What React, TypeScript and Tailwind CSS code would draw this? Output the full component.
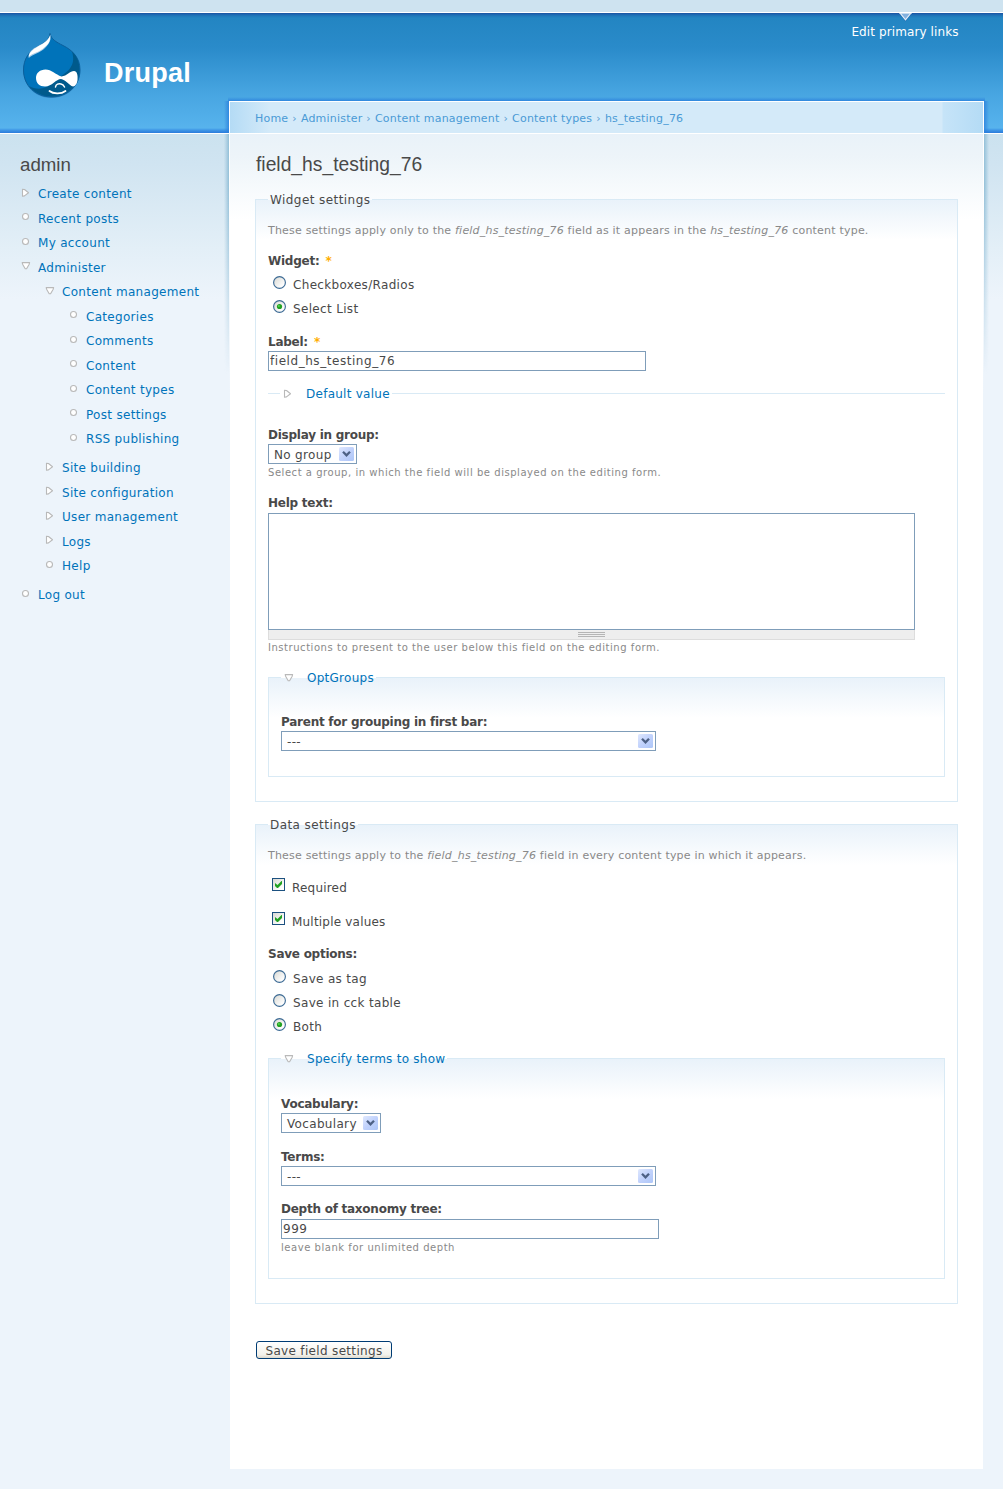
import React, { useState } from 'react';

type MenuState = 'leaf' | 'collapsed' | 'expanded';

interface MenuItem {
  title: string;
  state: MenuState;
  children?: MenuItem[];
}

const menu: MenuItem[] = [
  { title: 'Create content', state: 'collapsed' },
  { title: 'Recent posts', state: 'leaf' },
  { title: 'My account', state: 'leaf' },
  {
    title: 'Administer',
    state: 'expanded',
    children: [
      {
        title: 'Content management',
        state: 'expanded',
        children: [
          { title: 'Categories', state: 'leaf' },
          { title: 'Comments', state: 'leaf' },
          { title: 'Content', state: 'leaf' },
          { title: 'Content types', state: 'leaf' },
          { title: 'Post settings', state: 'leaf' },
          { title: 'RSS publishing', state: 'leaf' },
        ],
      },
      { title: 'Site building', state: 'collapsed' },
      { title: 'Site configuration', state: 'collapsed' },
      { title: 'User management', state: 'collapsed' },
      { title: 'Logs', state: 'collapsed' },
      { title: 'Help', state: 'leaf' },
    ],
  },
  { title: 'Log out', state: 'leaf' },
];

const breadcrumb = ['Home', 'Administer', 'Content management', 'Content types', 'hs_testing_76'];

function MenuIcon({ state, className = '' }: { state: MenuState; className?: string }) {
  return (
    <svg width="10" height="10" viewBox="0 0 10 10" className={`shrink-0 ${className}`} fill="#fff" stroke="#b9b9b9" strokeWidth="1.1">
      {state === 'leaf' && <circle cx="4.5" cy="4.5" r="3" />}
      {state === 'collapsed' && <path d="M1.5 1.2v7l2-.3 4-3.2-4-3.2z" strokeLinejoin="round" />}
      {state === 'expanded' && <path d="M1.2 1.6h7.4l-.4 1.6-2.6 4.6H4.2L1.6 3.2z" strokeLinejoin="round" />}
    </svg>
  );
}

function Menu({ items }: { items: MenuItem[] }) {
  return (
    <ul>
      {items.map((item) => (
        <li key={item.title}>
          <div className="flex h-[24.5px] items-start">
            <MenuIcon state={item.state} className="mt-[1.5px] ml-[1px]" />
            <a href="#" className="ml-[7px] h-4 leading-4 tracking-[0.3px] whitespace-nowrap text-[#0073ba]">{item.title}</a>
          </div>
          {item.children && (
            <div className="ml-6 pb-[4.5px]">
              <Menu items={item.children} />
            </div>
          )}
        </li>
      ))}
    </ul>
  );
}

function Logo() {
  return (
    <svg width="64" height="72" viewBox="0 0 64 72">
      <path
        d="M30 3.5C31 9 36 12 43 15.500C53 20.500 60 28 60 40C60 56 47 67 31.500 67C16 67 3.500 56 3.500 40C3.500 29 9 21.500 17 17C24 13 29.500 10 30 3.500Z"
        fill="#1a5f96"
        opacity="0.35"
        transform="translate(0 1)"
      />
      <path
        d="M30 3.5C31 9 36 12 43 15.500C53 20.500 60 28 60 40C60 56 47 67 31.500 67C16 67 3.500 56 3.500 40C3.500 29 9 21.500 17 17C24 13 29.500 10 30 3.500Z"
        fill="#0073ba"
        stroke="#0b5f9c"
      />
      <path d="M52 21.500C57.500 26.500 59.500 33 59.500 40C59.500 56 46.500 66.500 31.500 66.500C22 66.500 13.500 62 9 56C18 61 28 59 37 49C45 43 57 38 52 21.500Z" fill="#005a8c" />
      <path d="M30.300 4.500C31.500 9 30 13 25 18C20 23 14 23.500 8.700 28C8 22.500 12 19 18 16C24 13 28.500 10 30.300 4.500Z" fill="#a9cde8" />
      <path d="M29.800 6C28.500 10.500 24 13.500 18 16.500C12.500 19.500 9.500 22.500 8.700 26.500C13 23 18 22.500 22.500 19C28.500 14.500 30.800 11 29.800 6Z" fill="#fff" />
      <path d="M16 48C16 43 20 39.500 25.500 39.500C31.500 39.500 35.500 44.500 41.500 46.500C47 46 50 41 54 41C57 41 58 45 57.500 50C57 54.500 54.500 57.500 51.500 56C48 53.500 45.500 50 41 49C36 49 32 56.500 25 56.500C19.500 56.500 16 53 16 48Z" fill="#fff" />
      <path d="M35.500 57C36 54 38.500 53.500 41 54C43.500 54.500 44 56 44.500 57" fill="none" stroke="#fff" strokeWidth="1.500" strokeLinecap="round" />
      <path d="M29.500 61C33 64 41 64.500 45.500 61" fill="none" stroke="#fff" strokeWidth="1.800" strokeLinecap="round" />
    </svg>
  );
}

function Radio({ label, checked, onSelect }: { label: string; checked: boolean; onSelect: () => void }) {
  return (
    <label className="flex h-4 items-start pl-[5px] leading-4">
      <input type="radio" className="sr-only" checked={checked} onChange={onSelect} />
      <svg width="13" height="13" viewBox="0 0 13 13" className="-mt-px shrink-0">
        <circle cx="6.5" cy="6.5" r="5.900" fill="url(#bevel)" stroke="#3c6a94" strokeWidth="1.150" />
        {checked && <circle cx="6.5" cy="6.5" r="2.600" fill="#21a121" />}
        {checked && <circle cx="5.900" cy="5.900" r="1" fill="#55d551" />}
      </svg>
      <span className="ml-[7px]">{label}</span>
    </label>
  );
}

function Checkbox({ label }: { label: string }) {
  const [checked, setChecked] = useState(true);

  return (
    <label className="flex h-4 items-start pl-1 leading-4">
      <input type="checkbox" className="sr-only" checked={checked} onChange={() => setChecked(!checked)} />
      <svg width="13" height="13" viewBox="0 0 13 13" className="-mt-0.5 shrink-0">
        <rect x="0.5" y="0.5" width="12" height="12" fill="url(#bevel)" stroke="#1c5180" />
        {checked && <path d="M3 5v3l2 2h1l4-4V3h-.500L5.500 7z" fill="#21a121" />}
      </svg>
      <span className="ml-[7px] tracking-[0.2px]">{label}</span>
    </label>
  );
}

function FieldLabel({ children, required }: { children: React.ReactNode; required?: boolean }) {
  return (
    <div className="flex h-4 leading-4">
      <span className="font-bold tracking-[-0.25px]">{children}</span>
      {required && <span className="ml-1.5 font-bold text-[#ffae00]">*</span>}
    </div>
  );
}

function Select({ value, className = '' }: { value: string; className?: string }) {
  return (
    <button type="button" className={`flex h-5 items-start border border-[#7f9db9] bg-white pr-0.5 pl-[5px] text-left ${className}`}>
      <span className="flex-1 pt-0.5 leading-4 whitespace-nowrap">{value}</span>
      <svg width="15" height="14" viewBox="0 0 15 14" className="mt-0.5 shrink-0">
        <rect width="15" height="14" rx="1.500" fill="url(#arrow)" />
        <path d="M4 4.800l3.500 3.500 3.500-3.500" fill="none" stroke="#4d6185" strokeWidth="2.300" />
      </svg>
    </button>
  );
}

function TextInput({ value }: { value: string }) {
  return (
    <input
      type="text"
      defaultValue={value}
      className="block h-5 w-[378px] border border-[#7f9db9] bg-white px-px text-xs tracking-[0.55px] outline-none"
    />
  );
}

function Description({ children, className = '' }: { children: React.ReactNode; className?: string }) {
  return <div className={`h-4 text-[10px] leading-4 tracking-[0.54px] whitespace-nowrap text-[#898989] ${className}`}>{children}</div>;
}

function Intro({ children }: { children: React.ReactNode }) {
  return <p className="h-4 pt-px text-[11px] leading-4 tracking-[0.2px] whitespace-nowrap text-[#898989]">{children}</p>;
}

function Legend({ children }: { children: React.ReactNode }) {
  return <legend className="h-[15px] px-0.5 leading-[17px] tracking-[0.43px]">{children}</legend>;
}

function CollapsibleLegend({ children, state, className = '' }: { children: React.ReactNode; state: MenuState; className?: string }) {
  return (
    <legend className={`flex h-[15px] items-start pr-0.5 pl-[3px] leading-[17px] ${className}`}>
      <MenuIcon state={state} className="mt-[2.5px]" />
      <a href="#" className="ml-[13px] tracking-[0.26px] text-[#0073ba]">{children}</a>
    </legend>
  );
}

export default function App() {
  const [widget, setWidget] = useState('select');
  const [save, setSave] = useState('both');

  return (
    <div className="h-[1489px] w-[1003px] overflow-hidden bg-[#edf4fb] font-['DejaVu_Sans',Verdana,sans-serif] text-xs tracking-[0.33px] text-[#494949]">
      <svg width="0" height="0" className="absolute">
        <defs>
          <linearGradient id="bevel" x1="0" y1="0" x2="1" y2="1">
            <stop offset="0.1" stopColor="#dcdcd7" />
            <stop offset="0.8" stopColor="#fff" />
          </linearGradient>
          <linearGradient id="arrow" x1="0" y1="0" x2="1" y2="1">
            <stop offset="0" stopColor="#dfe8fe" />
            <stop offset="0.5" stopColor="#c1d2fc" />
            <stop offset="1" stopColor="#adc6f8" />
          </linearGradient>
        </defs>
      </svg>

      <div className="h-3 bg-[#cee3f0]" />
      <header className="flex h-[122px] justify-between border-y border-white bg-[linear-gradient(to_bottom,#1a52a0_0px,#1d62ad_1px,#2079bb_3px,#2385c2_5px,#2a8bca_35px,#47a5e1_80px,#57b3ed_115px,#3f97e6_117px,#2a7bdb_120px)]">
        <div className="flex pt-[17px] pl-5">
          <Logo />
          <h1 className="mt-[27px] ml-[20px] h-8 font-['Liberation_Sans',Arial,sans-serif] text-[27px] leading-8 font-bold tracking-[0.25px] text-white">Drupal</h1>
        </div>
        <nav className="mr-11 flex w-[108px] flex-col items-center">
          <svg width="13" height="9" viewBox="0 0 13 9">
            <path d="M0 0h13L6.500 8.500z" fill="#1b55a5" opacity="0.6" />
            <path d="M1 0h11L6.500 6.800z" fill="#82b1df" stroke="#e4eff8" strokeWidth="1.200" />
            <path d="M0 0h13" stroke="#d7e4f0" />
          </svg>
          <a href="#" className="mt-0.5 leading-4 tracking-[0.1px] whitespace-nowrap text-white">Edit primary links</a>
        </nav>
      </header>

      <div className="flex h-[1355px] items-start bg-[linear-gradient(to_bottom,#cbe2ef_0px,#d0e4f1_30px,#e3eff7_115px,#edf4fb_165px)]">
        <aside className="w-[229px] pt-[19px] pl-5">
          <h2 className="mb-[9px] h-6 font-['Liberation_Sans',Arial,sans-serif] text-[18.7px] leading-6 tracking-normal">admin</h2>
          <Menu items={menu} />
        </aside>

        <div className="relative -mt-[33px] w-[755px]">
          {/* glow round the top of the panel */}
          <div className="absolute -top-1 -left-px h-1 w-[757px] bg-[linear-gradient(to_bottom,#2a80dd00,#2a7fdccc)]" />
          <div className="absolute top-0 -left-[5px] h-8 w-[5px] bg-[linear-gradient(to_left,#2a7fdccc,#2a80dd00)]" />
          <div className="absolute top-0 -right-[5px] h-8 w-[5px] bg-[linear-gradient(to_right,#2a7fdccc,#2a80dd00)]" />
          <div className="absolute top-[33px] -left-[5px] h-[240px] w-[5px] bg-[linear-gradient(to_left,#94c0d8,#a9cde100)] [mask-image:linear-gradient(to_bottom,#000_50px,transparent)]" />
          <div className="absolute top-[33px] -right-[5px] h-[240px] w-[5px] bg-[linear-gradient(to_right,#94c0d8,#a9cde100)] [mask-image:linear-gradient(to_bottom,#000_50px,transparent)]" />

          <div className="flex h-[33px] items-start border border-white bg-[linear-gradient(to_right,#b4dbf5,#d4eaf9_40px,#d4eaf9_712px,#c6e4f8_713px,#b4dbf5)] pt-[9px] pl-[25px] text-[11px] leading-4 tracking-[0.2px]">
            {breadcrumb.map((crumb, i) => (
              <React.Fragment key={crumb}>
                {i > 0 && <span className="mx-1 text-[#5b9fd3]">›</span>}
                <a href="#" className="text-[#4a9ad6]">{crumb}</a>
              </React.Fragment>
            ))}
          </div>

          <div className="flex h-[1335px]">
            <div className="w-px bg-[linear-gradient(to_bottom,#fff_60px,#edf4fb_260px)]" />
            <main className="w-[753px] bg-white bg-[linear-gradient(to_bottom,#e9f2f9_0px,#edf4f9_22px,#f8fbfd_60px,#fff_86px)] pt-[19px] pr-[25px] pl-[25px]">
              <h2 className="mb-[15px] h-6 pl-px font-['Liberation_Sans',Arial,sans-serif] text-[19.3px] leading-6 tracking-normal">field_hs_testing_76</h2>

              <fieldset className="border border-[#d9eaf5] bg-[linear-gradient(to_bottom,#e9f2fa_0px,#fff_40px)] px-3 pb-6">
                <Legend>Widget settings</Legend>
                <div className="pt-[15px]">
                  <Intro>
                    These settings apply only to the <em>field_hs_testing_76</em> field as it appears in the <em>hs_testing_76</em> content type.
                  </Intro>
                </div>
                <div className="mt-[15px]">
                  <FieldLabel required>Widget:</FieldLabel>
                  <div className="mt-2 flex flex-col gap-2">
                    <Radio label="Checkboxes/Radios" checked={widget === 'checkboxes'} onSelect={() => setWidget('checkboxes')} />
                    <Radio label="Select List" checked={widget === 'select'} onSelect={() => setWidget('select')} />
                  </div>
                </div>
                <div className="mt-[17px]">
                  <FieldLabel required>Label:</FieldLabel>
                  <div className="mt-px">
                    <TextInput value="field_hs_testing_76" />
                  </div>
                </div>

                <fieldset className="mt-[15px] h-[15px] border-t border-[#d9eaf5]">
                  <CollapsibleLegend state="collapsed" className="ml-3">Default value</CollapsibleLegend>
                </fieldset>

                <div className="mt-[26px]">
                  <FieldLabel>Display in group:</FieldLabel>
                  <Select value="No group" className="mt-px w-[89px]" />
                  <Description className="pt-px">Select a group, in which the field will be displayed on the editing form.</Description>
                </div>
                <div className="mt-[15px]">
                  <FieldLabel>Help text:</FieldLabel>
                  <textarea className="mt-0.5 block h-[117px] w-[647px] resize-none border border-[#7f9db9] bg-white outline-none" />
                  <div className="flex h-2.5 w-[647px] justify-center border-x border-b border-[#ddd] bg-[#eee] pt-0.5">
                    <div className="flex w-[27px] flex-col gap-px">
                      <div className="h-px bg-[#b5b5b5]" />
                      <div className="h-px bg-[#b5b5b5]" />
                      <div className="h-px bg-[#b5b5b5]" />
                    </div>
                  </div>
                  <Description>Instructions to present to the user below this field on the editing form.</Description>
                </div>

                <fieldset className="mt-3.5 border border-[#d9eaf5] bg-[linear-gradient(to_bottom,#e9f2fa_0px,#fff_40px)] px-3 pb-[25px]">
                  <CollapsibleLegend state="expanded">OptGroups</CollapsibleLegend>
                  <div className="pt-[29px]">
                    <FieldLabel>Parent for grouping in first bar:</FieldLabel>
                    <Select value="---" className="mt-px w-[375px]" />
                  </div>
                </fieldset>
              </fieldset>

              <fieldset className="mt-[15px] border border-[#d9eaf5] bg-[linear-gradient(to_bottom,#e9f2fa_0px,#fff_40px)] px-3 pb-6">
                <Legend>Data settings</Legend>
                <div className="pt-[15px]">
                  <Intro>
                    These settings apply to the <em>field_hs_testing_76</em> field in every content type in which it appears.
                  </Intro>
                </div>
                <div className="mt-[17px] flex flex-col gap-[18px]">
                  <Checkbox label="Required" />
                  <Checkbox label="Multiple values" />
                </div>
                <div className="mt-4">
                  <FieldLabel>Save options:</FieldLabel>
                  <div className="mt-[9px] flex flex-col gap-2">
                    <Radio label="Save as tag" checked={save === 'tag'} onSelect={() => setSave('tag')} />
                    <Radio label="Save in cck table" checked={save === 'cck'} onSelect={() => setSave('cck')} />
                    <Radio label="Both" checked={save === 'both'} onSelect={() => setSave('both')} />
                  </div>
                </div>

                <fieldset className="mt-4 border border-[#d9eaf5] bg-[linear-gradient(to_bottom,#e9f2fa_0px,#fff_40px)] px-3 pb-[23px]">
                  <CollapsibleLegend state="expanded">Specify terms to show</CollapsibleLegend>
                  <div className="pt-[30px]">
                    <FieldLabel>Vocabulary:</FieldLabel>
                    <Select value="Vocabulary" className="mt-px w-[100px]" />
                  </div>
                  <div className="mt-4">
                    <FieldLabel>Terms:</FieldLabel>
                    <Select value="---" className="mt-px w-[375px]" />
                  </div>
                  <div className="mt-[15px]">
                    <FieldLabel>Depth of taxonomy tree:</FieldLabel>
                    <div className="mt-0.5">
                      <TextInput value="999" />
                    </div>
                    <Description className="pt-px">leave blank for unlimited depth</Description>
                  </div>
                </fieldset>
              </fieldset>

              <button
                type="submit"
                className="mt-[37px] ml-px flex h-[18px] w-[136px] items-center justify-center rounded-[3px] border border-[#003c74] bg-[linear-gradient(to_bottom,#fff,#f2f1eb_80%,#dcd8cc)] pt-px leading-4 whitespace-nowrap"
              >
                Save field settings
              </button>
            </main>
            <div className="w-px bg-[linear-gradient(to_bottom,#fff_60px,#edf4fb_260px)]" />
          </div>
        </div>
      </div>
    </div>
  );
}
